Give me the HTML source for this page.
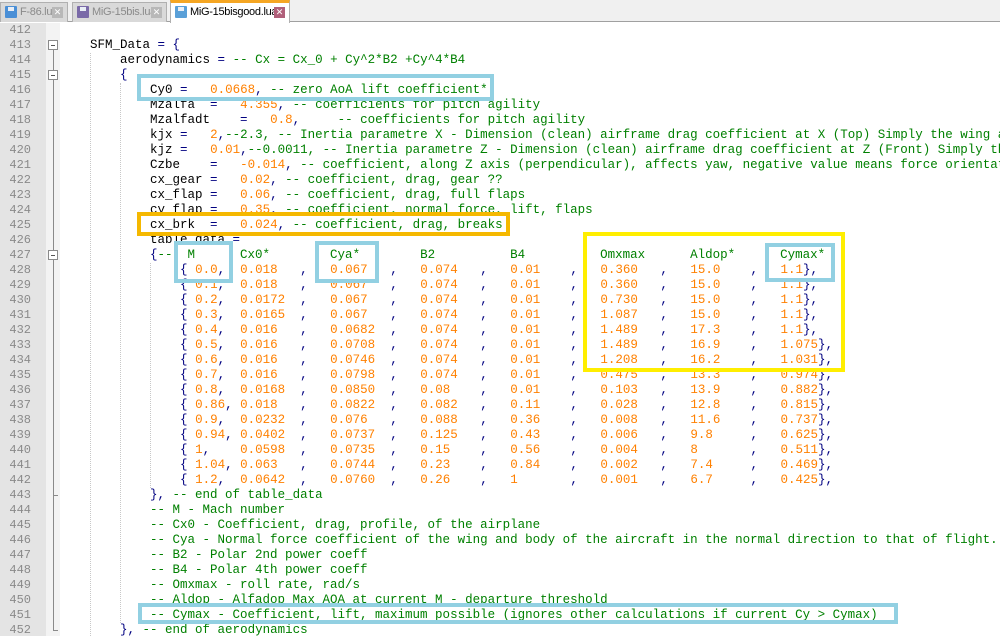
<!DOCTYPE html>
<html><head><meta charset="utf-8"><style>
*{margin:0;padding:0;box-sizing:border-box}
body{width:1000px;height:636px;overflow:hidden;background:#fff;position:relative;font-family:"Liberation Mono",monospace;font-size:12.5px}
#tabs{position:absolute;left:0;top:0;width:1000px;height:22px;background:#f0f0f0;border-bottom:1px solid #a0a0a0}
.tab{position:absolute;top:2px;height:20px;background:#d9d9d9;border:1px solid #b0b0b0;border-bottom:none;font-family:"Liberation Sans",sans-serif;font-size:11px;letter-spacing:-0.3px;color:#8a8a8a;line-height:18px;padding-left:19px;white-space:nowrap;overflow:hidden}
.tab.act{top:0;height:23px;background:#fff;color:#000;border-top:3px solid #f5a623;line-height:18px}
.ico{position:absolute;left:4px;top:3px;width:12px;height:12px;background:#4a8fd6;border-radius:1px}
.ico:after{content:"";position:absolute;left:3px;top:1px;width:6px;height:4px;background:#e8eef6}
.x{position:absolute;right:4px;top:4px;width:11px;height:11px;background:#b8b8b8;color:#fff;font-size:9px;line-height:11px;text-align:center;letter-spacing:0}
.act .x{background:#b0607a}
#gut{position:absolute;left:0;top:23px;width:46px;height:613px;background:#e4e4e4}
#fold{position:absolute;left:46px;top:23px;width:14px;height:613px;background:#f3f3f3}
.ln{position:absolute;left:0;width:31px;text-align:right;color:#8a8a8a;font-size:12px;line-height:15px;height:15px}
.l{position:absolute;left:60px;height:15px;line-height:15px;white-space:pre;color:#000}
.o{color:#000080}
.n{color:#ff8000}
.c{color:#008000}
.fb{position:absolute;left:48px;width:10px;height:10px;border:1px solid #8a8a8a;background:#fff}
.fb:after{content:"";position:absolute;left:2px;top:4px;width:4px;height:1px;background:#555}
.g{position:absolute;width:0;border-left:1px dotted #c8c8c8}
.box{position:absolute;border:4px solid #92d0e2}
</style></head><body>
<div id="tabs">
<div class="tab" style="left:0;width:68px"><div class="ico"></div>F-86.lua<div class="x">✕</div></div>
<div class="tab" style="left:72px;width:95px"><div class="ico" style="background:#7a6aa8"></div>MiG-15bis.lua<div class="x">✕</div></div>
<div class="tab act" style="left:170px;width:120px"><div class="ico" style="background:#5aa0d8"></div>MiG-15bisgood.lua<div class="x">✕</div></div>
</div>
<div id="gut"></div><div id="fold"></div>
<div style="position:absolute;left:53px;top:50px;width:1px;height:580px;background:#8a8a8a"></div>
<div class="fb" style="top:40px"></div><div class="fb" style="top:70px"></div><div class="fb" style="top:250px"></div>
<div style="position:absolute;left:53px;top:495px;width:5px;height:1px;background:#8a8a8a"></div>
<div style="position:absolute;left:53px;top:630px;width:5px;height:1px;background:#8a8a8a"></div>

<div class="ln" style="top:23px">412</div><div class="ln" style="top:38px">413</div><div class="ln" style="top:53px">414</div><div class="ln" style="top:68px">415</div><div class="ln" style="top:83px">416</div><div class="ln" style="top:98px">417</div><div class="ln" style="top:113px">418</div><div class="ln" style="top:128px">419</div><div class="ln" style="top:143px">420</div><div class="ln" style="top:158px">421</div><div class="ln" style="top:173px">422</div><div class="ln" style="top:188px">423</div><div class="ln" style="top:203px">424</div><div class="ln" style="top:218px">425</div><div class="ln" style="top:233px">426</div><div class="ln" style="top:248px">427</div><div class="ln" style="top:263px">428</div><div class="ln" style="top:278px">429</div><div class="ln" style="top:293px">430</div><div class="ln" style="top:308px">431</div><div class="ln" style="top:323px">432</div><div class="ln" style="top:338px">433</div><div class="ln" style="top:353px">434</div><div class="ln" style="top:368px">435</div><div class="ln" style="top:383px">436</div><div class="ln" style="top:398px">437</div><div class="ln" style="top:413px">438</div><div class="ln" style="top:428px">439</div><div class="ln" style="top:443px">440</div><div class="ln" style="top:458px">441</div><div class="ln" style="top:473px">442</div><div class="ln" style="top:488px">443</div><div class="ln" style="top:503px">444</div><div class="ln" style="top:518px">445</div><div class="ln" style="top:533px">446</div><div class="ln" style="top:548px">447</div><div class="ln" style="top:563px">448</div><div class="ln" style="top:578px">449</div><div class="ln" style="top:593px">450</div><div class="ln" style="top:608px">451</div><div class="ln" style="top:623px">452</div>

<div class="g" style="left:90px;top:53px;height:583px"></div>
<div class="g" style="left:120px;top:83px;height:540px"></div>
<div class="g" style="left:150px;top:263px;height:225px"></div>

<div class="l" style="top:38px">    SFM_Data <span class="o">= {</span></div>
<div class="l" style="top:53px">        aerodynamics <span class="o">=</span> <span class="c">-- Cx = Cx_0 + Cy^2*B2 +Cy^4*B4</span></div>
<div class="l" style="top:68px">        <span class="o">{</span></div>
<div class="l" style="top:83px">            Cy0 <span class="o">=</span>   <span class="n">0.0668</span><span class="o">,</span> <span class="c">-- zero AoA lift coefficient*</span></div>
<div class="l" style="top:98px">            Mzalfa  <span class="o">=</span>   <span class="n">4.355</span><span class="o">,</span> <span class="c">-- coefficients for pitch agility</span></div>
<div class="l" style="top:113px">            Mzalfadt    <span class="o">=</span>   <span class="n">0.8</span><span class="o">,</span>     <span class="c">-- coefficients for pitch agility</span></div>
<div class="l" style="top:128px">            kjx <span class="o">=</span>   <span class="n">2</span><span class="o">,</span><span class="c">--2.3, -- Inertia parametre X - Dimension (clean) airframe drag coefficient at X (Top) Simply the wing area</span></div>
<div class="l" style="top:143px">            kjz <span class="o">=</span>   <span class="n">0.01</span><span class="o">,</span><span class="c">--0.0011, -- Inertia parametre Z - Dimension (clean) airframe drag coefficient at Z (Front) Simply the</span></div>
<div class="l" style="top:158px">            Czbe    <span class="o">=</span>   <span class="n">-0.014</span><span class="o">,</span> <span class="c">-- coefficient, along Z axis (perpendicular), affects yaw, negative value means force orientation</span></div>
<div class="l" style="top:173px">            cx_gear <span class="o">=</span>   <span class="n">0.02</span><span class="o">,</span> <span class="c">-- coefficient, drag, gear ??</span></div>
<div class="l" style="top:188px">            cx_flap <span class="o">=</span>   <span class="n">0.06</span><span class="o">,</span> <span class="c">-- coefficient, drag, full flaps</span></div>
<div class="l" style="top:203px">            cy_flap <span class="o">=</span>   <span class="n">0.35</span><span class="o">,</span> <span class="c">-- coefficient, normal force, lift, flaps</span></div>
<div class="l" style="top:218px">            cx_brk  <span class="o">=</span>   <span class="n">0.024</span><span class="o">,</span> <span class="c">-- coefficient, drag, breaks</span></div>
<div class="l" style="top:233px">            table_data <span class="o">=</span></div>
<div class="l" style="top:248px">            <span class="o">{</span><span class="c">--  M      Cx0*        Cya*        B2          B4          Omxmax      Aldop*      Cymax*</span></div>

<div class="l" style="top:263px">                <span class="o">{</span> <span class="n">0.0</span><span class="o">,</span>  <span class="n">0.018 </span>  <span class="o">,</span>   <span class="n">0.067 </span>  <span class="o">,</span>   <span class="n">0.074 </span>  <span class="o">,</span>   <span class="n">0.01  </span>  <span class="o">,</span>   <span class="n">0.360 </span>  <span class="o">,</span>   <span class="n">15.0  </span>  <span class="o">,</span>   <span class="n">1.1</span><span class="o">},</span></div>
<div class="l" style="top:278px">                <span class="o">{</span> <span class="n">0.1</span><span class="o">,</span>  <span class="n">0.018 </span>  <span class="o">,</span>   <span class="n">0.067 </span>  <span class="o">,</span>   <span class="n">0.074 </span>  <span class="o">,</span>   <span class="n">0.01  </span>  <span class="o">,</span>   <span class="n">0.360 </span>  <span class="o">,</span>   <span class="n">15.0  </span>  <span class="o">,</span>   <span class="n">1.1</span><span class="o">},</span></div>
<div class="l" style="top:293px">                <span class="o">{</span> <span class="n">0.2</span><span class="o">,</span>  <span class="n">0.0172</span>  <span class="o">,</span>   <span class="n">0.067 </span>  <span class="o">,</span>   <span class="n">0.074 </span>  <span class="o">,</span>   <span class="n">0.01  </span>  <span class="o">,</span>   <span class="n">0.730 </span>  <span class="o">,</span>   <span class="n">15.0  </span>  <span class="o">,</span>   <span class="n">1.1</span><span class="o">},</span></div>
<div class="l" style="top:308px">                <span class="o">{</span> <span class="n">0.3</span><span class="o">,</span>  <span class="n">0.0165</span>  <span class="o">,</span>   <span class="n">0.067 </span>  <span class="o">,</span>   <span class="n">0.074 </span>  <span class="o">,</span>   <span class="n">0.01  </span>  <span class="o">,</span>   <span class="n">1.087 </span>  <span class="o">,</span>   <span class="n">15.0  </span>  <span class="o">,</span>   <span class="n">1.1</span><span class="o">},</span></div>
<div class="l" style="top:323px">                <span class="o">{</span> <span class="n">0.4</span><span class="o">,</span>  <span class="n">0.016 </span>  <span class="o">,</span>   <span class="n">0.0682</span>  <span class="o">,</span>   <span class="n">0.074 </span>  <span class="o">,</span>   <span class="n">0.01  </span>  <span class="o">,</span>   <span class="n">1.489 </span>  <span class="o">,</span>   <span class="n">17.3  </span>  <span class="o">,</span>   <span class="n">1.1</span><span class="o">},</span></div>
<div class="l" style="top:338px">                <span class="o">{</span> <span class="n">0.5</span><span class="o">,</span>  <span class="n">0.016 </span>  <span class="o">,</span>   <span class="n">0.0708</span>  <span class="o">,</span>   <span class="n">0.074 </span>  <span class="o">,</span>   <span class="n">0.01  </span>  <span class="o">,</span>   <span class="n">1.489 </span>  <span class="o">,</span>   <span class="n">16.9  </span>  <span class="o">,</span>   <span class="n">1.075</span><span class="o">},</span></div>
<div class="l" style="top:353px">                <span class="o">{</span> <span class="n">0.6</span><span class="o">,</span>  <span class="n">0.016 </span>  <span class="o">,</span>   <span class="n">0.0746</span>  <span class="o">,</span>   <span class="n">0.074 </span>  <span class="o">,</span>   <span class="n">0.01  </span>  <span class="o">,</span>   <span class="n">1.208 </span>  <span class="o">,</span>   <span class="n">16.2  </span>  <span class="o">,</span>   <span class="n">1.031</span><span class="o">},</span></div>
<div class="l" style="top:368px">                <span class="o">{</span> <span class="n">0.7</span><span class="o">,</span>  <span class="n">0.016 </span>  <span class="o">,</span>   <span class="n">0.0798</span>  <span class="o">,</span>   <span class="n">0.074 </span>  <span class="o">,</span>   <span class="n">0.01  </span>  <span class="o">,</span>   <span class="n">0.475 </span>  <span class="o">,</span>   <span class="n">13.3  </span>  <span class="o">,</span>   <span class="n">0.974</span><span class="o">},</span></div>
<div class="l" style="top:383px">                <span class="o">{</span> <span class="n">0.8</span><span class="o">,</span>  <span class="n">0.0168</span>  <span class="o">,</span>   <span class="n">0.0850</span>  <span class="o">,</span>   <span class="n">0.08  </span>  <span class="o">,</span>   <span class="n">0.01  </span>  <span class="o">,</span>   <span class="n">0.103 </span>  <span class="o">,</span>   <span class="n">13.9  </span>  <span class="o">,</span>   <span class="n">0.882</span><span class="o">},</span></div>
<div class="l" style="top:398px">                <span class="o">{</span> <span class="n">0.86</span><span class="o">,</span> <span class="n">0.018 </span>  <span class="o">,</span>   <span class="n">0.0822</span>  <span class="o">,</span>   <span class="n">0.082 </span>  <span class="o">,</span>   <span class="n">0.11  </span>  <span class="o">,</span>   <span class="n">0.028 </span>  <span class="o">,</span>   <span class="n">12.8  </span>  <span class="o">,</span>   <span class="n">0.815</span><span class="o">},</span></div>
<div class="l" style="top:413px">                <span class="o">{</span> <span class="n">0.9</span><span class="o">,</span>  <span class="n">0.0232</span>  <span class="o">,</span>   <span class="n">0.076 </span>  <span class="o">,</span>   <span class="n">0.088 </span>  <span class="o">,</span>   <span class="n">0.36  </span>  <span class="o">,</span>   <span class="n">0.008 </span>  <span class="o">,</span>   <span class="n">11.6  </span>  <span class="o">,</span>   <span class="n">0.737</span><span class="o">},</span></div>
<div class="l" style="top:428px">                <span class="o">{</span> <span class="n">0.94</span><span class="o">,</span> <span class="n">0.0402</span>  <span class="o">,</span>   <span class="n">0.0737</span>  <span class="o">,</span>   <span class="n">0.125 </span>  <span class="o">,</span>   <span class="n">0.43  </span>  <span class="o">,</span>   <span class="n">0.006 </span>  <span class="o">,</span>   <span class="n">9.8   </span>  <span class="o">,</span>   <span class="n">0.625</span><span class="o">},</span></div>
<div class="l" style="top:443px">                <span class="o">{</span> <span class="n">1</span><span class="o">,</span>    <span class="n">0.0598</span>  <span class="o">,</span>   <span class="n">0.0735</span>  <span class="o">,</span>   <span class="n">0.15  </span>  <span class="o">,</span>   <span class="n">0.56  </span>  <span class="o">,</span>   <span class="n">0.004 </span>  <span class="o">,</span>   <span class="n">8     </span>  <span class="o">,</span>   <span class="n">0.511</span><span class="o">},</span></div>
<div class="l" style="top:458px">                <span class="o">{</span> <span class="n">1.04</span><span class="o">,</span> <span class="n">0.063 </span>  <span class="o">,</span>   <span class="n">0.0744</span>  <span class="o">,</span>   <span class="n">0.23  </span>  <span class="o">,</span>   <span class="n">0.84  </span>  <span class="o">,</span>   <span class="n">0.002 </span>  <span class="o">,</span>   <span class="n">7.4   </span>  <span class="o">,</span>   <span class="n">0.469</span><span class="o">},</span></div>
<div class="l" style="top:473px">                <span class="o">{</span> <span class="n">1.2</span><span class="o">,</span>  <span class="n">0.0642</span>  <span class="o">,</span>   <span class="n">0.0760</span>  <span class="o">,</span>   <span class="n">0.26  </span>  <span class="o">,</span>   <span class="n">1     </span>  <span class="o">,</span>   <span class="n">0.001 </span>  <span class="o">,</span>   <span class="n">6.7   </span>  <span class="o">,</span>   <span class="n">0.425</span><span class="o">},</span></div>

<div class="l" style="top:488px">            <span class="o">},</span> <span class="c">-- end of table_data</span></div>
<div class="l c" style="top:503px">            -- M - Mach number</div>
<div class="l c" style="top:518px">            -- Cx0 - Coefficient, drag, profile, of the airplane</div>
<div class="l c" style="top:533px">            -- Cya - Normal force coefficient of the wing and body of the aircraft in the normal direction to that of flight.</div>
<div class="l c" style="top:548px">            -- B2 - Polar 2nd power coeff</div>
<div class="l c" style="top:563px">            -- B4 - Polar 4th power coeff</div>
<div class="l c" style="top:578px">            -- Omxmax - roll rate, rad/s</div>
<div class="l c" style="top:593px">            -- Aldop - Alfadop Max AOA at current M - departure threshold</div>
<div class="l c" style="top:608px">            -- Cymax - Coefficient, lift, maximum possible (ignores other calculations if current Cy &gt; Cymax)</div>
<div class="l" style="top:623px">        <span class="o">},</span> <span class="c">-- end of aerodynamics</span></div>

<div class="box" style="left:137px;top:74px;width:357px;height:27px"></div>
<div class="box" style="left:137px;top:212px;width:373px;height:24px;border-color:#f5b800"></div>
<div class="box" style="left:174px;top:241px;width:59px;height:42px"></div>
<div class="box" style="left:315px;top:241px;width:64px;height:42px"></div>
<div class="box" style="left:583px;top:232px;width:262px;height:140px;border-color:#ffee00"></div>
<div class="box" style="left:765px;top:243px;width:70px;height:39px"></div>
<div class="box" style="left:138px;top:603px;width:760px;height:21px"></div>
</body></html>
